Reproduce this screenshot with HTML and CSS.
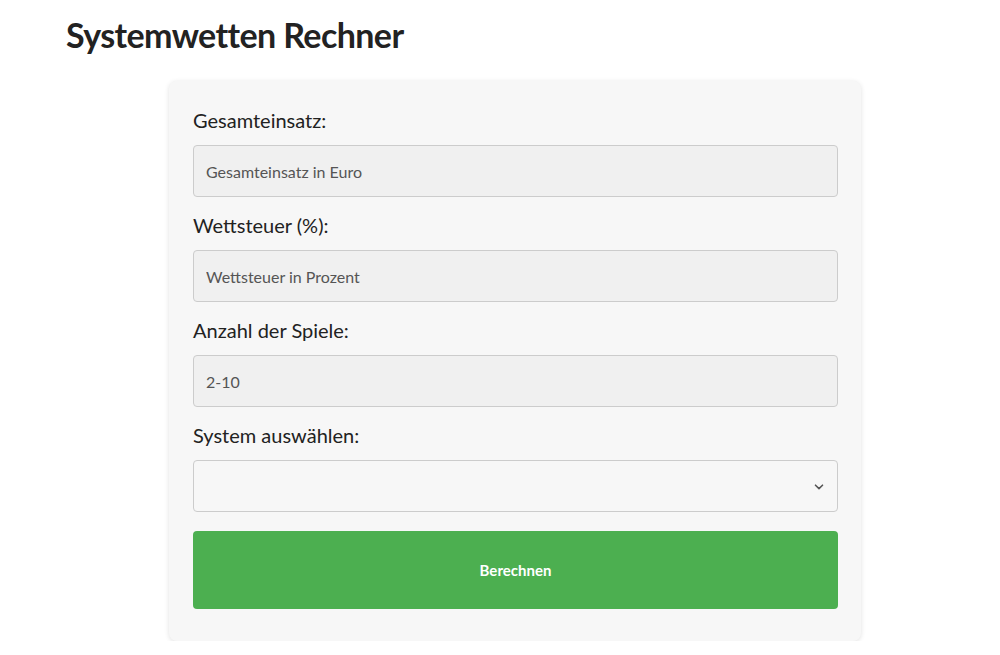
FILE: index.html
```html
<!DOCTYPE html>
<html lang="de">
<head>
<meta charset="utf-8">
<title>Systemwetten Rechner</title>
<link rel="stylesheet" href="styles.css">
</head>
<body>
<main class="page">
  <h1 class="title">Systemwetten Rechner</h1>
  <form class="card">
    <label class="label" for="stake">Gesamteinsatz:</label>
    <input class="field" id="stake" type="text" placeholder="Gesamteinsatz in Euro">
    <label class="label" for="tax">Wettsteuer (%):</label>
    <input class="field" id="tax" type="text" placeholder="Wettsteuer in Prozent">
    <label class="label" for="games">Anzahl der Spiele:</label>
    <input class="field" id="games" type="text" placeholder="2-10">
    <label class="label" for="system">System auswählen:</label>
    <div class="select-wrap">
      <select class="field select" id="system"><option></option></select>
      <svg class="chevron" width="10" height="6" viewBox="0 0 10 6"><path d="M1.5 1.2 L5 4.6 L8.5 1.2" fill="none" stroke="#555" stroke-width="1.6" stroke-linecap="round" stroke-linejoin="round"/></svg>
    </div>
    <button class="btn" type="button">Berechnen</button>
  </form>
</main>
</body>
</html>
```
FILE: styles.css
```css
* { box-sizing: border-box; }
html, body { margin: 0; padding: 0; background: #ffffff; }
body { font-family: Lato, "Open Sans", Arial, sans-serif; color: #222; }
.page { width: 898px; margin-left: 66px; padding-top: 13px; }
.title {
  margin: 0 0 24px 0;
  font-size: 34px;
  line-height: 44px;
  font-weight: 700;
  letter-spacing: -0.6px;
  color: #222;
}
.card {
  width: 692px;
  margin: 0 auto;
  background: #f7f7f7;
  border-radius: 8px;
  box-shadow: 0 1px 5px rgba(0,0,0,0.12);
  padding: 26px 23px 32px 24px;
  display: flex;
  flex-direction: column;
}
.label {
  display: block;
  font-size: 20px;
  line-height: 26px;
  margin-bottom: 12px;
  color: #222;
}
.field {
  display: block;
  width: 100%;
  height: 52px;
  margin: 0 0 15px 0;
  padding: 0 12px;
  font-family: Lato, "Open Sans", Arial, sans-serif;
  font-size: 16px;
  color: #333;
  background: #f0f0f0;
  border: 1px solid #cccccc;
  border-radius: 4px;
  outline: none;
}
.field::placeholder { color: #555; opacity: 1; }
.select-wrap { position: relative; margin-bottom: 19px; }
.select {
  -webkit-appearance: none;
  appearance: none;
  background: #f7f7f7;
  margin: 0;
}
.chevron { position: absolute; right: 14px; top: 24px; }
.btn {
  height: 78px;
  width: 100%;
  border: none;
  border-radius: 4px;
  background: #4caf50;
  color: #ffffff;
  font-family: Lato, "Open Sans", Arial, sans-serif;
  font-size: 15px;
  font-weight: 700;
}
```
